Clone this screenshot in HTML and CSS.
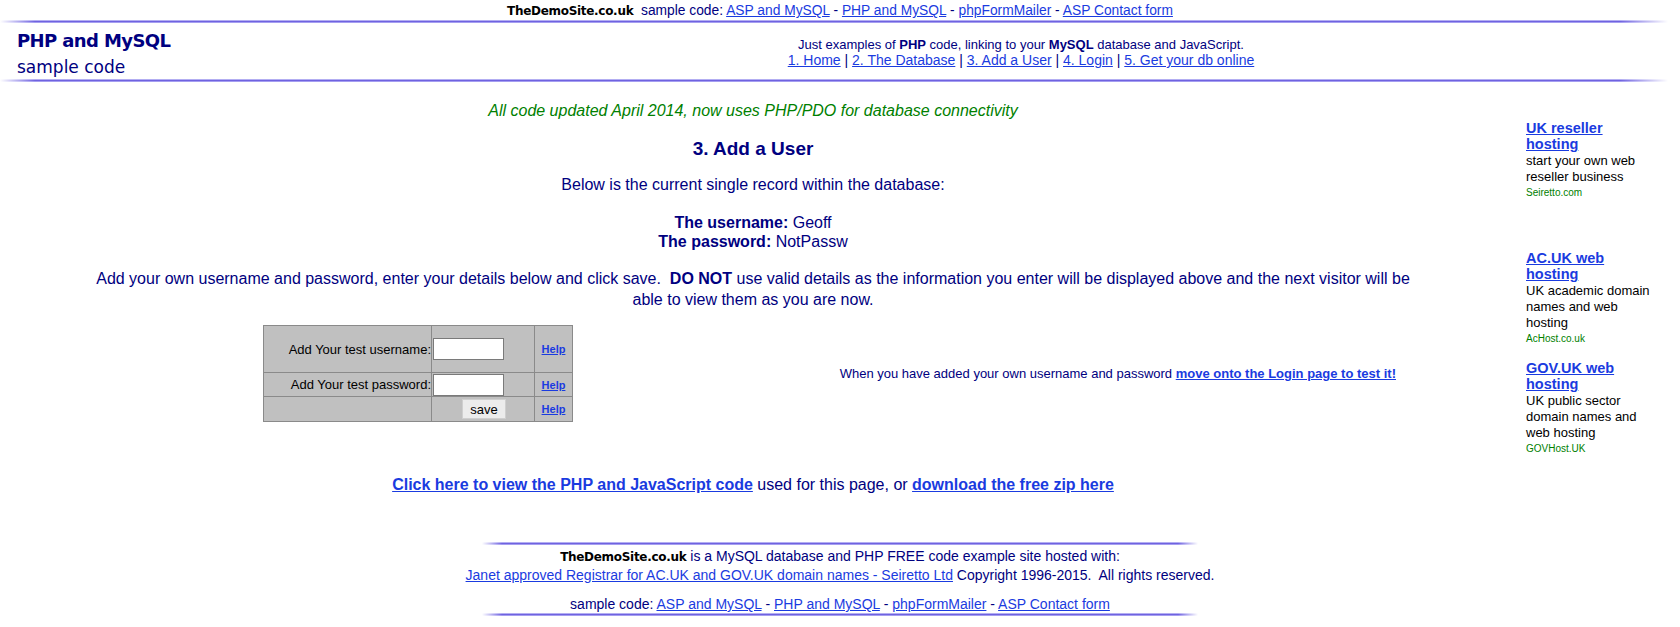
FILE: index.html
```html
<!DOCTYPE html>
<html>
<head>
<meta charset="utf-8">
<title>PHP and MySQL sample code - Add a User</title>
<link rel="stylesheet" href="styles.css">
</head>
<body>
<div class="topbar"><span class="brand">TheDemoSite.co.uk</span>&nbsp; sample code: <a href="#">ASP and MySQL</a> - <a href="#">PHP and MySQL</a> - <a href="#">phpFormMailer</a> - <a href="#">ASP Contact form</a></div>
<div class="rule"></div>
<div class="header">
  <div class="logo">
    <div class="logo-title">PHP and MySQL</div>
    <div class="logo-sub">sample code</div>
  </div>
  <div class="intro">
    <div>Just examples of <b>PHP</b> code, linking to your <b>MySQL</b> database and JavaScript.</div>
    <div class="nav"><a href="#">1. Home</a> | <a href="#">2. The Database</a> | <a href="#">3. Add a User</a> | <a href="#">4. Login</a> | <a href="#">5. Get your db online</a></div>
  </div>
</div>
<div class="rule"></div>
<div class="page">
  <div class="main">
    <p class="updated">All code updated April 2014, now uses PHP/PDO for database connectivity</p>
    <h3 class="title">3. Add a User</h3>
    <p class="lead">Below is the current single record within the database:</p>
    <p class="record"><b>The username:</b> Geoff<br><b>The password:</b> NotPassw</p>
    <p class="explain">Add your own username and password, enter your details below and click save.&nbsp; <b>DO NOT</b> use valid details as the information you enter will be displayed above and the next visitor will be able to view them as you are now.</p>
    <div class="formrow">
      <div class="formcell">
        <table class="form">
          <tr class="r1">
            <td class="lab">Add Your test username:</td>
            <td class="inp"><input type="text" class="field"></td>
            <td class="help"><a href="#">Help</a></td>
          </tr>
          <tr class="r2">
            <td class="lab">Add Your test password:</td>
            <td class="inp"><input type="password" class="field"></td>
            <td class="help"><a href="#">Help</a></td>
          </tr>
          <tr class="r3">
            <td class="lab"></td>
            <td class="inp btncell"><button class="save">save</button></td>
            <td class="help"><a href="#">Help</a></td>
          </tr>
        </table>
      </div>
      <div class="next">When you have added your own username and password <a href="#">move onto the Login page to test it!</a></div>
    </div>
    <p class="codelink"><a href="#">Click here to view the PHP and JavaScript code</a> used for this page, or <a href="#">download the free zip here</a></p>
  </div>
  <div class="side">
    <div class="ad">
      <a class="ad-title" href="#">UK reseller hosting</a>
      <div class="ad-text">start your own web reseller business</div>
      <div class="ad-url">Seiretto.com</div>
    </div>
    <div class="ad ad2">
      <a class="ad-title" href="#">AC.UK web hosting</a>
      <div class="ad-text">UK academic domain names and web hosting</div>
      <div class="ad-url">AcHost.co.uk</div>
    </div>
    <div class="ad ad3">
      <a class="ad-title" href="#">GOV.UK web hosting</a>
      <div class="ad-text">UK public sector domain names and web hosting</div>
      <div class="ad-url">GOVHost.UK</div>
    </div>
  </div>
</div>
<div class="footer">
  <div class="rule short"></div>
  <div class="foot-text"><span class="brand">TheDemoSite.co.uk</span> is a MySQL database and PHP FREE code example site hosted with:<br><a href="#">Janet approved Registrar for AC.UK and GOV.UK domain names - Seiretto Ltd</a> Copyright 1996-2015.&nbsp; All rights reserved.</div>
  <div class="foot-links">sample code: <a href="#">ASP and MySQL</a> - <a href="#">PHP and MySQL</a> - <a href="#">phpFormMailer</a> - <a href="#">ASP Contact form</a></div>
  <div class="rule short"></div>
</div>
</body>
</html>
```
FILE: styles.css
```css
html, body {
  margin: 0;
  padding: 0;
  background: #ffffff;
}
body {
  font-family: "Liberation Sans", Arial, sans-serif;
  color: #000080;
  width: 1680px;
  overflow: hidden;
}
a {
  color: #1a3be0;
  text-decoration: underline;
}
.brand {
  font-family: "DejaVu Sans", sans-serif;
  font-weight: bold;
  color: #000000;
  font-size: 12px;
  letter-spacing: -0.3px;
}
.topbar {
  text-align: center;
  font-size: 13.8px;
  line-height: 16px;
  padding-top: 3px;
  height: 16px;
}
.rule {
  height: 3px;
  margin-top: 1px;
  width: 1668px;
  background:
    linear-gradient(90deg, #ffffff 0px, rgba(255,255,255,0) 35px, rgba(255,255,255,0) 1620px, #ffffff 1668px),
    linear-gradient(180deg, #b3aef2 0px, #b3aef2 1px, #6f62e0 1px, #6f62e0 2px, #a59ef0 2px);
}
.header {
  display: flex;
  height: 55px;
  align-items: flex-start;
}
.logo {
  width: 362px;
  padding-left: 17px;
  box-sizing: border-box;
  font-family: "DejaVu Sans", sans-serif;
  color: #000080;
}
.logo-title {
  font-size: 18px;
  font-weight: bold;
  line-height: 22px;
  margin-top: 7px;
  letter-spacing: -0.6px;
}
.logo-sub {
  font-size: 17px;
  line-height: 22px;
  margin-top: 4px;
}
.intro {
  width: 1318px;
  text-align: center;
  font-size: 13px;
  line-height: 16px;
  padding-top: 14px;
}
.intro b {
  color: #000080;
}
.nav {
  font-size: 14px;
  line-height: 15px;
}
.page {
  display: flex;
  align-items: flex-start;
}
.main {
  width: 1506px;
  text-align: center;
  font-size: 16px;
}
.main p {
  margin: 0;
}
.updated {
  color: #008000;
  font-style: italic;
  padding-top: 20px;
  line-height: 18px;
}
.title {
  font-size: 19px;
  margin: 0;
  padding-top: 18px;
  line-height: 22px;
}
.lead {
  padding-top: 16px;
  line-height: 18px;
}
.record {
  padding-top: 19px;
  line-height: 19px;
}
.explain {
  width: 1330px;
  margin: 0 auto !important;
  padding-top: 17px;
  line-height: 21px;
}
.formrow {
  display: flex;
  align-items: center;
  margin-top: 15px;
}
.formcell {
  width: 836px;
  display: flex;
  justify-content: center;
}
.form {
  border-collapse: collapse;
  background: #c0c0c0;
  border: 1px solid #808080;
  font-size: 13px;
  color: #000000;
}
.form td {
  border: 1px solid #8a8a8a;
  padding: 0;
  box-sizing: border-box;
}
.r1 td { height: 47px; }
.r2 td { height: 24px; }
.r3 td { height: 25px; }
.lab {
  width: 168px;
  text-align: right;
}
.inp {
  width: 103px;
  text-align: left;
}
.field {
  width: 71px;
  height: 22px;
  box-sizing: border-box;
  border: 1px solid #7a7a7a;
  background: #ffffff;
  margin: 0 0 0 1px;
  padding: 0;
  vertical-align: middle;
}
.btncell {
  text-align: right;
  padding-right: 28px !important;
}
.save {
  font-family: "Liberation Sans", Arial, sans-serif;
  font-size: 13px;
  width: 44px;
  height: 20px;
  padding: 0;
  border: 1px solid #cfcfcf;
  background: #ececec;
  color: #000;
  vertical-align: middle;
}
.help {
  width: 38px;
  text-align: center;
  font-size: 11px;
  font-weight: bold;
}
.next {
  width: 560px;
  text-align: right;
  font-size: 13px;
  color: #000080;
}
.next a {
  font-weight: bold;
}
.codelink {
  padding-top: 54px;
  line-height: 18px;
}
.codelink a {
  font-weight: bold;
}
.side {
  width: 140px;
  margin-left: 20px;
  padding-top: 38px;
  font-size: 13px;
  color: #000000;
  text-align: left;
}
.ad-title {
  display: block;
  font-weight: bold;
  font-size: 14.5px;
  line-height: 16px;
  width: 112px;
}
.ad-text {
  line-height: 16px;
  width: 125px;
  font-size: 13px;
  padding-top: 1px;
}
.ad-url {
  color: #008000;
  font-size: 10px;
  line-height: 15px;
}
.ad2 {
  margin-top: 50px;
}
.ad3 {
  margin-top: 14px;
}
.footer {
  width: 716px;
  margin: 48px auto 0;
  display: flex;
  flex-direction: column;
  align-items: center;
  text-align: center;
  font-size: 14px;
  line-height: 18px;
}
.rule.short {
  width: 716px;
  margin: 0;
  background:
    linear-gradient(90deg, #ffffff 0px, rgba(255,255,255,0) 20px, rgba(255,255,255,0) 696px, #ffffff 716px),
    linear-gradient(180deg, #b3aef2 0px, #b3aef2 1px, #6f62e0 1px, #6f62e0 2px, #a59ef0 2px);
}
.foot-text {
  padding-top: 2px;
  white-space: nowrap;
}
.foot-links {
  padding-top: 12px;
  white-space: nowrap;
  line-height: 17px;
}
```
